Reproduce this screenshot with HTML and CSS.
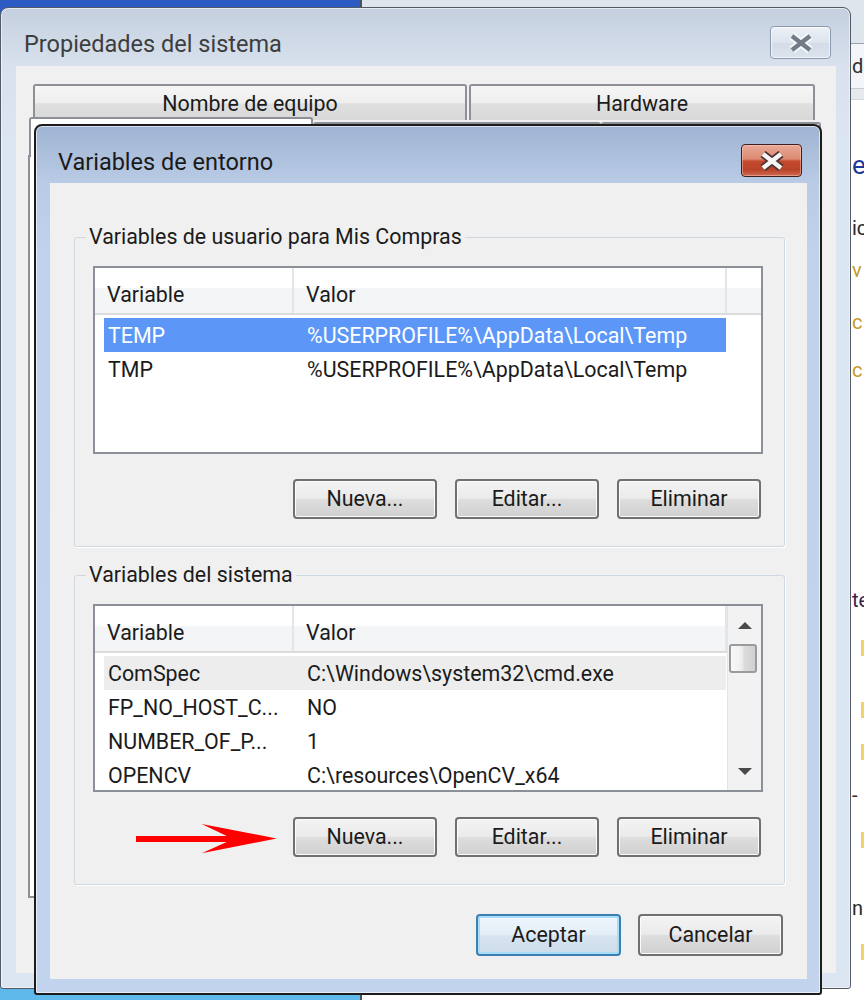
FILE: index.html
```html
<!DOCTYPE html>
<html lang="es">
<head>
<meta charset="utf-8">
<title>Variables de entorno</title>
<link rel="stylesheet" href="styles.css">
</head>
<body>
<div class="desktop">
  <div class="bg-win">
    <div class="bgw-chrome"></div>
    <div class="bgw-address">do</div>
    <div class="bgw-band"></div>
    <div class="bgw-body">
      <div class="frag frag-link">en</div>
      <div class="frag">ic</div>
      <div class="frag frag-gold">v</div>
      <div class="frag frag-gold">c</div>
      <div class="frag frag-gold">c</div>
      <div class="frag frag-dark">te</div>
      <div class="frag"><span class="bar"></span></div>
      <div class="frag"><span class="bar"></span></div>
      <div class="frag"><span class="bar"></span></div>
      <div class="frag">-</div>
      <div class="frag"><span class="bar"></span></div>
      <div class="frag">n</div>
      <div class="frag"><span class="bar"></span></div>
    </div>
  </div>

  <div class="win win-outer">
    <div class="titlebar">
      <span class="title title-outer">Propiedades del sistema</span>
      <div class="cap-btn cap-close-inactive">
        <svg width="26" height="20" viewBox="0 0 26 20"><path d="M4 3 L22 17 M22 3 L4 17" stroke="#f7f9fb" stroke-width="8"/><path d="M4 3 L22 17 M22 3 L4 17" stroke="#737b88" stroke-width="4.5"/></svg>
      </div>
    </div>
    <div class="client client-outer">
      <div class="tabs-row1">
        <div class="tab tab-a">Nombre de equipo</div>
        <div class="tab tab-b">Hardware</div>
      </div>
      <div class="tabs-row2">
        <div class="tab tab-sel"></div>
        <div class="tab tab-c"></div>
        <div class="tab tab-d"></div>
      </div>
      <div class="tab-panel"></div>
    </div>
  </div>

  <div class="win win-inner">
    <div class="titlebar">
      <span class="title title-inner">Variables de entorno</span>
      <div class="cap-btn cap-close-active">
        <svg width="26" height="20" viewBox="0 0 26 20"><path d="M4 3 L22 17 M22 3 L4 17" stroke="#4e3434" stroke-width="8"/><path d="M4 3 L22 17 M22 3 L4 17" stroke="#f6f6f6" stroke-width="4.5"/></svg>
      </div>
    </div>
    <div class="client client-inner">
      <fieldset class="group group-user">
        <legend>Variables de usuario para Mis Compras</legend>
        <div class="group-body">
          <div class="lv">
            <div class="lv-main">
              <div class="lv-head">
                <div class="lv-hcell c1">Variable</div>
                <div class="lv-hcell c2">Valor</div>
                <div class="lv-hcell filler"></div>
              </div>
              <div class="lv-rows">
                <div class="lv-row sel"><span class="c1">TEMP</span><span class="c2">%USERPROFILE%\AppData\Local\Temp</span></div>
                <div class="lv-row"><span class="c1">TMP</span><span class="c2">%USERPROFILE%\AppData\Local\Temp</span></div>
              </div>
            </div>
          </div>
          <div class="btn-row">
            <button class="btn">Nueva...</button>
            <button class="btn">Editar...</button>
            <button class="btn">Eliminar</button>
          </div>
        </div>
      </fieldset>

      <fieldset class="group group-sys">
        <legend>Variables del sistema</legend>
        <div class="group-body">
          <div class="lv">
            <div class="lv-main">
              <div class="lv-head">
                <div class="lv-hcell c1">Variable</div>
                <div class="lv-hcell c2 last">Valor</div>
              </div>
              <div class="lv-rows">
                <div class="lv-row hot"><span class="c1">ComSpec</span><span class="c2">C:\Windows\system32\cmd.exe</span></div>
                <div class="lv-row"><span class="c1">FP_NO_HOST_C...</span><span class="c2">NO</span></div>
                <div class="lv-row"><span class="c1">NUMBER_OF_P...</span><span class="c2">1</span></div>
                <div class="lv-row"><span class="c1">OPENCV</span><span class="c2">C:\resources\OpenCV_x64</span></div>
              </div>
            </div>
            <div class="lv-scroll">
              <div class="sb-btn"><svg width="14" height="7" viewBox="0 0 14 7"><polygon points="0,7 7,0 14,7" fill="#4a4a4a"/></svg></div>
              <div class="sb-thumb"></div>
              <div class="sb-track"></div>
              <div class="sb-btn"><svg width="14" height="7" viewBox="0 0 14 7"><polygon points="0,0 14,0 7,7" fill="#4a4a4a"/></svg></div>
            </div>
          </div>
          <div class="btn-row">
            <button class="btn">Nueva...</button>
            <button class="btn">Editar...</button>
            <button class="btn">Eliminar</button>
          </div>
        </div>
      </fieldset>

      <div class="dlg-buttons">
        <button class="btn btn-lg btn-default">Aceptar</button>
        <button class="btn btn-lg">Cancelar</button>
      </div>
    </div>
  </div>

  <svg class="annot-arrow" width="152" height="40" viewBox="0 0 152 40"><polygon points="6,18 96.7,18 71.7,6 146.7,20.5 71.7,35.3 96.7,24 6,24" fill="#ff0000"/></svg>
</div>
</body>
</html>
```

FILE: styles.css
```css
* { box-sizing: border-box; }
html, body { margin: 0; padding: 0; }
body {
  width: 864px;
  height: 1000px;
  overflow: hidden;
  font-family: Roboto, "Noto Sans", sans-serif;
  font-size: 21.4px;
  color: #1b1b1b;
  background: #5fb9ea;
}
.desktop {
  position: relative;
  width: 864px;
  height: 1000px;
  overflow: hidden;
  background: linear-gradient(#2c5bc3 0, #3f7bd0 40%, #5fb9ea 100%);
}

/* ---------- window behind ---------- */
.bg-win {
  position: absolute;
  left: 360px;
  top: 0;
  width: 520px;
  height: 1000px;
  border-left: 2px solid #4b525b;
  background: #fff;
  display: flex;
  flex-direction: column;
}
.bgw-chrome { flex: none; height: 44px; background: #dfe5ec; border-bottom: 1px solid #98a3b1; }
.bgw-address { flex: none; height: 44px; background: #f3f5f8; padding-left: 490px; line-height: 44px; font-size: 20px; color: #2f2f2f; }
.bgw-band { flex: none; height: 12px; background: #e6eaef; border-top: 1px solid #c8ced6; border-bottom: 1px solid #d3d8de; }
.bgw-body { padding-left: 490px; display: flex; flex-direction: column; }
.frag { height: 20px; line-height: 20px; font-size: 20px; color: #2b2b2b; white-space: nowrap; }
.frag-link { color: #1f3b9a; font-size: 26px; }
.frag-gold { color: #c79a2b; }
.frag-dark { color: #3a2348; }
.bar { display: block; margin: 2px 0 0 9px; width: 4px; height: 16px; background: #f1d36a; }
.frag:nth-child(1) { margin-top: 55px; }
.frag:nth-child(2) { margin-top: 43px; }
.frag:nth-child(3) { margin-top: 22px; }
.frag:nth-child(4) { margin-top: 32px; }
.frag:nth-child(5) { margin-top: 28px; }
.frag:nth-child(6) { margin-top: 210px; }
.frag:nth-child(7) { margin-top: 28px; }
.frag:nth-child(8) { margin-top: 42px; }
.frag:nth-child(9) { margin-top: 22px; }
.frag:nth-child(10) { margin-top: 23px; }
.frag:nth-child(11) { margin-top: 25px; }
.frag:nth-child(12) { margin-top: 48px; }
.frag:nth-child(13) { margin-top: 24px; }

/* ---------- windows ---------- */
.win {
  position: absolute;
  display: flex;
  flex-direction: column;
}
.titlebar {
  flex: none;
  display: flex;
  justify-content: space-between;
  align-items: flex-start;
}
.title {
  font-size: 23.5px;
  line-height: 28px;
  white-space: nowrap;
}
.cap-btn {
  width: 61px;
  height: 33px;
  border-radius: 4px;
  display: flex;
  align-items: center;
  justify-content: center;
}

/* outer: Propiedades del sistema */
.win-outer {
  left: 0;
  top: 7px;
  width: 851px;
  height: 982px;
  border: 1px solid #535a63;
  border-radius: 8px 8px 3px 3px;
  background: linear-gradient(#c4d0df 0, #d8e1ed 58px, #dce5f2 140px, #dce5f2 100%);
  box-shadow: inset 0 0 0 1px rgba(255, 255, 255, 0.55);
}
.win-outer .titlebar { height: 58px; }
.title-outer { margin: 22px 0 0 23px; color: #3d3d3d; }
.cap-close-inactive {
  margin: 18px 19px 0 0;
  border: 1px solid #8c9ab0;
  background: linear-gradient(#edf1f6, #dde4ee 50%, #d3dce8 52%, #dbe3ee);
  box-shadow: inset 0 0 0 1px rgba(255, 255, 255, 0.6);
}
.client-outer {
  flex: 1;
  margin: 0 14px 15px 15px;
  background: #f0f0f0;
  padding-top: 18px;
}
.tabs-row1 { display: flex; gap: 2px; margin-left: 17px; }
.tab {
  height: 36px;
  border: 2px solid #8d9096;
  border-bottom: none;
  border-radius: 3px 3px 0 0;
  background: linear-gradient(#f6f6f6, #eeeeee 50%, #e0e0e0 52%, #d8d8d8);
  text-align: center;
  padding-top: 5px;
  line-height: 26px;
  white-space: nowrap;
}
.tab-a { width: 434px; }
.tab-b { width: 346px; }
.tabs-row2 { display: flex; margin: -3px 0 0 13px; position: relative; }
.tab-sel { width: 284px; height: 40px; background: #fff; }
.tab-c { width: 288px; margin-top: 5px; height: 35px; }
.tab-d { width: 220px; margin-top: 5px; height: 35px; }
.tab-panel {
  margin: -2px 0 0 12px;
  width: 792px;
  height: 743px;
  border: 2px solid #8d9096;
  background: #fff;
}

/* inner: Variables de entorno */
.win-inner {
  left: 34px;
  top: 124px;
  width: 788px;
  height: 871px;
  border: 2px solid #1c1c1c;
  border-radius: 8px 8px 3px 3px;
  background: linear-gradient(#9fb4d2 0, #b9cbe5 57px, #c1d3ec 130px, #c2d4ed 100%);
  box-shadow: inset 0 0 0 1px rgba(255, 255, 255, 0.6);
}
.win-inner .titlebar { height: 57px; }
.title-inner { margin: 22px 0 0 22px; color: #1a1a1a; }
.cap-close-active {
  margin: 18px 18px 0 0;
  border: 1px solid #3d1f1f;
  background: linear-gradient(#e9a996 0, #dc8a73 45%, #c4492d 52%, #b9432a 80%, #d06a4f 100%);
  box-shadow: inset 0 0 0 1px rgba(255, 210, 200, 0.45);
}
.client-inner {
  flex: 1;
  margin: 0 13px 14px 14px;
  background: #f0f0f0;
  display: flex;
  flex-direction: column;
}

/* group boxes */
.group {
  margin: 0 0 0 24px;
  width: 711px;
  min-width: 0;
  padding: 16px 0 27px 0;
  border: 1px solid #cfd8e0;
  border-radius: 3px;
  box-shadow: 1px 1px 0 #ffffff;
}
.group-user { margin-top: 41px; }
.group-sys { margin-top: 15px; }
.group legend {
  margin-left: 11px;
  padding: 0 3px;
  line-height: 26px;
  white-space: nowrap;
}
.group-body { margin-left: 18px; }

/* list views */
.lv {
  width: 670px;
  height: 188px;
  border: 2px solid #8b8f97;
  background: #fff;
  display: flex;
  overflow: hidden;
}
.lv-main { flex: 1; min-width: 0; }
.lv-head {
  display: flex;
  height: 47px;
  border-bottom: 2px solid #dcdcdc;
  background: linear-gradient(#ffffff 20px, #f4f5f7 20px);
}
.lv-hcell {
  padding: 7px 0 0 12px;
  display: flex;
  align-items: center;
  border-right: 2px solid #e2e5e9;
  white-space: nowrap;
}
.lv-hcell.c1 { width: 199px; }
.lv-hcell.c2 { width: 433px; }
.lv-hcell.filler { flex: 1; border-right: none; }
.lv-rows { padding: 3px 0 0 9px; }
.lv-row {
  display: flex;
  align-items: center;
  width: 622px;
  height: 34px;
  white-space: nowrap;
}
.lv-row .c1 { width: 190px; padding-left: 4px; overflow: hidden; }
.lv-row .c2 { padding-left: 13px; }
.lv-row.sel { background: #5c97f8; color: #fff; }
.lv-row.hot { background: #ededed; }

.lv-scroll {
  flex: none;
  width: 34px;
  background: #f2f2f2;
  border-left: 1px solid #e4e4e4;
  display: flex;
  flex-direction: column;
}
.sb-btn { flex: none; height: 38px; display: flex; align-items: center; justify-content: center; }
.sb-thumb {
  flex: none;
  height: 29px;
  margin: 0 4px 0 1px;
  border: 2px solid #9b9b9b;
  border-radius: 3px;
  background: linear-gradient(to right, #f9f9f9, #eeeeee 45%, #dcdcdc 55%, #d0d0d0);
}
.sb-track { flex: 1; }

/* buttons */
.btn-row {
  display: flex;
  justify-content: flex-end;
  gap: 18px;
  width: 670px;
  padding-right: 2px;
  margin-top: 25px;
}
.btn {
  width: 144px;
  height: 40px;
  padding: 0;
  border: 2px solid #707070;
  border-radius: 4px;
  background: linear-gradient(#f3f3f3 0, #ebebeb 48%, #dddddd 52%, #d0d0d0 100%);
  box-shadow: inset 0 0 0 1px #fbfbfb;
  font: inherit;
  line-height: 1;
  color: #1b1b1b;
}
.dlg-buttons {
  display: flex;
  justify-content: flex-end;
  gap: 17px;
  margin: 29px 24px 0 0;
}
.btn-lg { width: 145px; height: 42px; }
.btn-default {
  border-color: #3c7fb1;
  box-shadow: inset 0 0 0 2px #a9dcf7;
  background: linear-gradient(#eef6fc 0, #e4eff8 48%, #d7e5f1 52%, #cddcea 100%);
}

/* annotation */
.annot-arrow { position: absolute; left: 130px; top: 818px; }
```
